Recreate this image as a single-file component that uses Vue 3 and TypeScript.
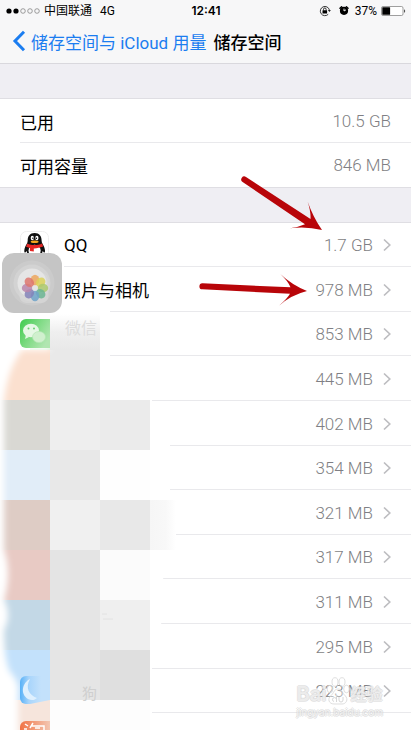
<script setup lang="ts">
interface Summary {
  label: string
  value: string
}

interface AppUsage {
  id: string
  name: string
  size: string
}

interface Tile {
  x: number
  y: number
  w: number
  h: number
  fill: string
}

const summary: Summary[] = [
  { label: '已用', value: '10.5 GB' },
  { label: '可用容量', value: '846 MB' },
]

const apps: AppUsage[] = [
  { id: 'qq', name: 'QQ', size: '1.7 GB' },
  { id: 'photos', name: '照片与相机', size: '978 MB' },
  { id: 'a3', name: '', size: '853 MB' },
  { id: 'a4', name: '', size: '445 MB' },
  { id: 'a5', name: '', size: '402 MB' },
  { id: 'a6', name: '', size: '354 MB' },
  { id: 'a7', name: '', size: '321 MB' },
  { id: 'a8', name: '', size: '317 MB' },
  { id: 'a9', name: '', size: '311 MB' },
  { id: 'a10', name: '', size: '295 MB' },
  { id: 'a11', name: '', size: '223 MB' },
  { id: 'a12', name: '', size: '' },
]

const tileRows: string[][] = [
  ['#fbe0cf', '#e9e9e9'],
  ['#d9d8d3', '#eeeeee', '#ebebeb'],
  ['#e1edf8', '#e8e8e8', '#fefefe'],
  ['#deccc5', '#f0f0f0', '#e8e8e8'],
  ['#e8cac4', '#e4e4e4', '#fbfbfb'],
  ['#c3d8e6', '#e5e5e5', '#efefef'],
  ['#c3e1fb', '#e5e5e5', '#dfdfdf'],
]

const tiles: Tile[] = tileRows.flatMap((row, r) =>
  row.map((fill, c) => ({ x: c * 50, y: 40 + r * 50, w: 50, h: 50, fill })),
)

const petals: { angle: number; fill: string }[] = [
  { angle: 0, fill: '#eda75e' },
  { angle: 45, fill: '#dcd25a' },
  { angle: 90, fill: '#adc96f' },
  { angle: 135, fill: '#6bb593' },
  { angle: 180, fill: '#6fa3c9' },
  { angle: 225, fill: '#8482b8' },
  { angle: 270, fill: '#bb86ab' },
  { angle: 315, fill: '#de776f' },
]
</script>

<template>
  <div class="screen">
    <header class="top">
      <div class="status">
        <div class="carrier">
          <svg class="dots" width="34" height="8" viewBox="0 0 34 8" aria-hidden="true">
            <circle cx="3" cy="4" r="2.6" />
            <circle cx="10" cy="4" r="2.6" />
            <g fill="none" stroke="#777" stroke-width=".7">
              <circle cx="17" cy="4" r="2.3" />
              <circle cx="24" cy="4" r="2.3" />
              <circle cx="31" cy="4" r="2.3" />
            </g>
          </svg>
          <span>中国联通</span>
          <span class="network">4G</span>
        </div>
        <time class="clock">12:41</time>
        <div class="indicators">
          <svg width="12" height="12" viewBox="0 0 12 12" aria-hidden="true">
            <path d="M9.2 9.3A4.6 4.6 0 1 1 10.4 5" fill="none" stroke="#222" stroke-width=".9" />
            <path d="M8.9 5h3l-1.5 2z" fill="#222" />
            <rect x="3.5" y="5.2" width="4.6" height="3.4" rx=".4" />
            <path d="M4.5 5.400V4.300a1.300 1.300 0 0 1 2.600 0v1.100" fill="none" stroke="#000" stroke-width=".8" />
          </svg>
          <svg class="alarm" width="10" height="11" viewBox="0 0 10 11" aria-hidden="true">
            <circle cx="5" cy="5.8" r="4.100" />
            <path d="M1 3.200 2.600 1.700M9 3.200 7.400 1.700" stroke="#000" stroke-width="1.500" stroke-linecap="round" />
            <path d="M5 6V3.600M5 6 7 4.800" stroke="#fff" stroke-width=".9" />
          </svg>
          <span>37%</span>
          <svg width="25" height="10" viewBox="0 0 25 10" aria-hidden="true">
            <rect x=".5" y=".5" width="21.5" height="9" rx="1.5" fill="#fff" stroke="#777" stroke-width=".7" />
            <rect x="1.3" y="1.2" width="7.8" height="7.6" rx=".6" />
            <path d="M23 3.2c1.6.4 1.6 3.2 0 3.6z" fill="#555" />
          </svg>
        </div>
      </div>
      <nav class="nav">
        <button class="back" type="button">
          <svg width="14" height="22" viewBox="0 0 14 22" aria-hidden="true">
            <path d="M12 1.8 3 11l9 9.2" fill="none" stroke="#1b7df0" stroke-width="3" />
          </svg>
          <span>储存空间与 iCloud 用量</span>
        </button>
        <h1 class="title">储存空间</h1>
      </nav>
    </header>

    <main>
      <dl class="group summary">
        <div v-for="item in summary" :key="item.label" class="row">
          <dt>{{ item.label }}</dt>
          <dd class="value">{{ item.value }}</dd>
        </div>
      </dl>

      <ul class="group apps">
        <li v-for="app in apps" :key="app.id">
          <a class="row" href="#">
            <span class="slot">
              <svg v-if="app.id === 'qq'" width="29" height="29" viewBox="0 0 29 29" aria-hidden="true">
                <rect x=".5" y=".5" width="28" height="28" rx="6" fill="#fff" stroke="#eee" />
                <ellipse cx="10.5" cy="26.6" rx="4.2" ry="1.7" fill="#f3a51d" />
                <ellipse cx="18.8" cy="26.6" rx="4.2" ry="1.7" fill="#f3a51d" />
                <path d="M14.6 2C9.800 2 7.700 5.400 7.700 9.500c0 1.300-.3 2.200-.9 3.200-1.300 2.200-3 5.600-2.400 8.400.3 1.100 1.400.2 2.200-1.100.7 4 3.700 6.400 8 6.400s7.400-2.400 8.100-6.400c.8 1.300 1.900 2.200 2.200 1.100.6-2.800-1.100-6.200-2.400-8.400-.6-1-.9-1.900-.9-3.200C21.600 5.400 19.400 2 14.600 2z" fill="#101010" />
                <ellipse cx="14.600" cy="19.800" rx="6.100" ry="6" fill="#fff" />
                <ellipse cx="12.300" cy="7" rx="1.600" ry="2.200" fill="#fff" />
                <ellipse cx="16.900" cy="7" rx="1.600" ry="2.200" fill="#fff" />
                <circle cx="12.900" cy="7.300" r=".7" />
                <circle cx="16.400" cy="7.300" r=".7" />
                <ellipse cx="14.600" cy="10.800" rx="4" ry="1.300" fill="#f3a51d" />
                <path d="M7.200 12.500c4.500 2 10.400 2 14.900 0l1 3.100c-3.300 1.300-6.500 1.900-9.300 1.800v3.100l-3.900-.4.100-3.100-3.900-1.300z" fill="#e52523" />
              </svg>
            </span>
            <span class="name">{{ app.name }}</span>
            <span class="value">{{ app.size }}</span>
            <svg v-if="app.size" class="chevron" width="8" height="14" viewBox="0 0 8 14" aria-hidden="true">
              <path d="m1 1.500 5.800 5.500L1 12.500" fill="none" stroke="#bdbdc0" stroke-width="1.700" />
            </svg>
          </a>
        </li>
      </ul>
    </main>

    <svg class="mosaic" width="180" height="420" viewBox="0 0 180 420" aria-hidden="true">
      <defs>
        <filter id="soft" x="-20%" y="-5%" width="140%" height="110%">
          <feGaussianBlur stdDeviation="3" />
        </filter>
        <mask id="edge" maskUnits="userSpaceOnUse" x="0" y="0" width="180" height="420">
          <path d="M50-10V40H22Q8 58 4 90V240Q12 262 4 290Q12 305 4 320Q4 350 10 362Q20 372 18 384V440H200V-10z" fill="#fff" filter="url(#soft)" />
        </mask>
        <linearGradient id="fadeDown" x1="0" y1="0" x2="0" y2="1">
          <stop offset="0" stop-color="#fff" />
          <stop offset=".5" stop-color="#efefef" />
          <stop offset="1" stop-color="#e8e8e8" />
        </linearGradient>
        <linearGradient id="fadeRight" x1="0" y1="0" x2="1" y2="0">
          <stop offset="0" stop-color="#f6f6f6" />
          <stop offset=".6" stop-color="#f8f8f8" />
          <stop offset="1" stop-color="#fff" />
        </linearGradient>
        <linearGradient id="green" x1="0" y1="0" x2="1" y2=".6">
          <stop offset="0" stop-color="#3ecb4d" />
          <stop offset=".5" stop-color="#7bda81" />
          <stop offset="1" stop-color="#b0e6b0" />
        </linearGradient>
        <linearGradient id="blue" x1="0" y1="0" x2="1" y2="0">
          <stop offset="0" stop-color="#58b1f7" />
          <stop offset=".3" stop-color="#a9d5fb" />
          <stop offset=".7" stop-color="#c3e1fb" />
        </linearGradient>
        <linearGradient id="orange" x1="0" y1="0" x2="1" y2="0">
          <stop offset="0" stop-color="#f17345" />
          <stop offset="1" stop-color="#f3c7b2" />
        </linearGradient>
      </defs>
      <path d="M0 4H62V0H110V60L106 90H152V130H170V180H174V230L164 250L160 340L152 350V420H0z" fill="#fff" />
      <g mask="url(#edge)">
        <rect v-for="(tile, i) in tiles" :key="i" :x="tile.x" :y="tile.y" :width="tile.w" :height="tile.h" :fill="tile.fill" />
        <rect x="0" y="390" width="50" height="30" fill="#f6e5dc" />
        <rect x="50" y="390" width="100" height="30" fill="#fdfdfd" />
        <rect x="30" y="20" width="20" height="20" fill="#d8f0d6" />
      </g>
      <rect x="50" y="4" width="50" height="36" fill="url(#fadeDown)" />
      <rect x="150" y="190" width="26" height="50" fill="url(#fadeRight)" />
      <text x="65" y="24" font-size="16" fill="#dcdcdc">微信</text>
      <path d="M50 9H26a6 6 0 0 0-6 6V32a6 6 0 0 0 6 6H50z" fill="url(#green)" />
      <ellipse cx="31" cy="20.500" rx="8" ry="6.800" fill="#e6f8e5" />
      <path d="m26 25-1 4 4-2z" fill="#e6f8e5" />
      <ellipse cx="39" cy="27" rx="6.500" ry="5.500" fill="#d0f0ce" stroke="#b5e6b5" stroke-width=".7" />
      <circle cx="28.500" cy="18.500" r="1" fill="#68cf6f" />
      <circle cx="34" cy="18.500" r="1" fill="#68cf6f" />
      <path d="M50 366H26a6 6 0 0 0-6 6V388a6 6 0 0 0 6 6H30L50 390z" fill="url(#blue)" />
      <path d="M30 369c-8 4-10 15-2 20 4 2 7 1 9-1-8-3-12-10-7-19z" fill="#dff0fe" />
      <path d="M50 411H26a6 6 0 0 0-6 6v3h30z" fill="url(#orange)" />
      <path d="m25 414 3 2M24 419h3M33 413l-3 5M32 416h12v4M35 418h5" fill="none" stroke="#fff" stroke-width="1.500" />
      <text x="82" y="389" font-size="15" fill="#cfcfcf">狗</text>
      <path d="M102 304h5M103 309h10" stroke="#e2e2e2" />
    </svg>

    <button class="assistive" type="button" aria-label="AssistiveTouch">
      <svg width="60" height="60" viewBox="0 0 60 60" aria-hidden="true">
        <circle cx="30" cy="30" r="22.500" fill="#cbcbcb" />
        <circle cx="30" cy="30" r="18.500" fill="#d3d3d3" />
        <rect x="17.500" y="20" width="29" height="30" rx="7" fill="#dadada" fill-opacity=".6" />
        <circle cx="30" cy="30" r="14.500" fill="#e5e5e5" />
        <ellipse v-for="petal in petals" :key="petal.angle" cx="33" cy="27" rx="4.300" ry="5.200" :fill="petal.fill" fill-opacity=".85" :transform="`rotate(${petal.angle} 33 35)`" />
      </svg>
    </button>

    <svg class="arrows" width="411" height="320" viewBox="0 0 411 320" aria-hidden="true">
      <path d="M246 177 310.500 219Q311 212 307.700 201.700Q313 217 322 230Q306 226 290 228.300Q299 227 305 224.300L242.600 182A3 3 0 0 1 246 177z" />
      <path d="M202.500 283.300 290.500 287.300Q288 281 280.300 274Q292 285 307 291Q291 295 279 305.700Q287 299 290 293.800L202.300 289.300A3 3 0 0 1 202.500 283.300z" />
    </svg>

    <div class="watermark" aria-hidden="true">
      <div class="brand">
        <span>Bai</span>
        <svg width="24" height="30" viewBox="0 0 24 30">
          <g fill="#fff" fill-opacity=".35" stroke="#d6d6d6" stroke-opacity=".8">
            <ellipse cx="4" cy="13" rx="2.800" ry="3.800" />
            <ellipse cx="9" cy="6" rx="3" ry="4.300" />
            <ellipse cx="16" cy="6" rx="3" ry="4.300" />
            <ellipse cx="20.500" cy="13" rx="2.800" ry="3.800" />
            <path d="M12 13c4 0 4 4 7 6.500 4 4 1 8.500-3 8.500H8c-5 0-7-5-3-8.500C8 17 8 13 12 13z" />
          </g>
          <path d="M10.500 19v7M10.500 23.500a2 2 0 1 0-2.500 2M13 21v3q0 2 2 2t2-2v-3" fill="none" stroke="#d6d6d6" />
        </svg>
        <span class="brand-cjk">经验</span>
      </div>
      <div class="site">jingyan.baidu.com</div>
    </div>
  </div>
</template>

<style>
body {
  background: #fff;
}
</style>

<style scoped>
.screen {
  position: relative;
  height: 100vh;
  overflow: hidden;
  background: #efeef3;
  color: #000;
  font-family: Roboto, "Noto Sans CJK SC", sans-serif;
  font-size: 17px;
}

.top {
  background: #f7f7f8;
  border-bottom: 1px solid #d9d8dd;
}

.status {
  display: grid;
  grid-template-columns: 1fr auto 1fr;
  align-items: center;
  height: 21px;
  padding: 0 5px 0 6px;
  font-size: 12px;
  line-height: 20px;
}

.carrier,
.indicators {
  display: flex;
  align-items: center;
  gap: 4px;
}

.network {
  margin-left: 4px;
}

.indicators {
  justify-content: flex-end;
}

.alarm {
  margin: 0 2px 0 4px;
}

.clock {
  font-family: Inter, sans-serif;
  font-weight: 600;
}

.nav {
  display: flex;
  align-items: center;
  gap: 7px;
  box-sizing: border-box;
  height: 42px;
  padding: 0 12px 2px;
}

.back {
  display: flex;
  align-items: center;
  gap: 5px;
  padding: 0;
  border: 0;
  background: none;
  color: #1b7df0;
  font: inherit;
  white-space: nowrap;
}

.title {
  margin: 0;
  font-size: 17px;
  font-weight: 500;
  white-space: nowrap;
}

.group {
  margin: 34px 0 0;
  padding: 0;
  border-top: 1px solid #dfdee3;
  background: #fff;
  list-style: none;
}

.summary {
  border-bottom: 1px solid #dfdee3;
}

.row {
  position: relative;
  display: flex;
  align-items: center;
  box-sizing: border-box;
  height: 44px;
  padding: 0 20px;
  color: inherit;
  text-decoration: none;
}

.row::after {
  content: "";
  position: absolute;
  right: 0;
  bottom: 0;
  left: 20px;
  border-bottom: 1px solid #e9e9ec;
}

.summary .row:last-child::after {
  display: none;
}

.apps .row {
  height: 45px;
}

.apps li:nth-child(5n + 1) .row,
.apps li:nth-child(5n + 3) .row {
  height: 44px;
}

.apps .row::after {
  left: 64px;
}

.slot {
  display: flex;
  width: 44px;
}

.value {
  margin: 0 0 0 auto;
  color: #7f7f84;
  font-weight: 300;
}

.chevron {
  margin-left: 10px;
}

.mosaic {
  position: absolute;
  top: 310px;
  left: 0;
}

.assistive {
  position: absolute;
  top: 253px;
  left: 2px;
  display: flex;
  padding: 0;
  border: 0;
  border-radius: 12px;
  overflow: hidden;
  background: #c5c5c5;
}

.arrows {
  position: absolute;
  top: 0;
  left: 0;
  fill: #b80509;
  pointer-events: none;
}

.watermark {
  position: absolute;
  top: 675px;
  right: 28px;
  color: #fff9;
  font-family: Inter, "Noto Sans CJK SC", sans-serif;
  pointer-events: none;
  text-shadow: 1px 0 #ccc7, -1px 0 #ccc7, 0 1px #ccc7, 0 -1px #ccc7;
}

.brand {
  display: flex;
  align-items: flex-end;
  height: 31px;
  font-size: 20px;
  font-weight: 600;
  line-height: 24px;
}

.brand-cjk {
  font-size: 16px;
}

.site {
  font-size: 10px;
  line-height: 12px;
}
</style>
